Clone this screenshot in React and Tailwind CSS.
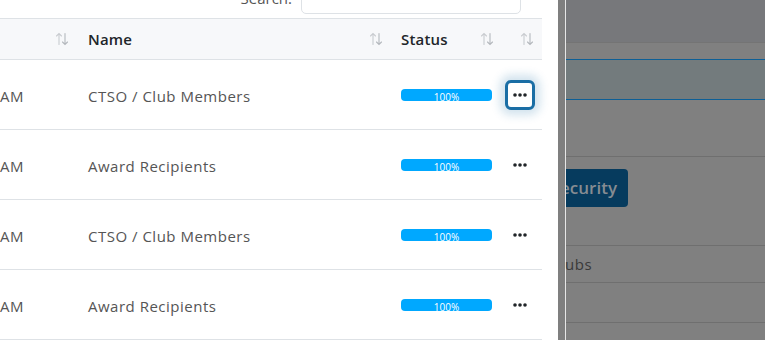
import React from 'react';

const rows = [
  { time: 'AM', name: 'CTSO / Club Members', focused: true },
  { time: 'AM', name: 'Award Recipients' },
  { time: 'AM', name: 'CTSO / Club Members' },
  { time: 'AM', name: 'Award Recipients' },
];

function SortIcon() {
  return (
    <svg width="14" height="14" viewBox="0 0 14 14" fill="none" strokeWidth="1.1" strokeLinecap="round">
      <g stroke="#c9ccd0">
        <path d="M4 12.5V1.5M1.5 4L4 1.5L6.5 4" />
      </g>
      <g stroke="#b4b8bd">
        <path d="M10 1.5V12.5M7.5 10L10 12.5L12.5 10" />
      </g>
    </svg>
  );
}

function Dots() {
  return (
    <svg width="14" height="4" viewBox="0 0 14 4" fill="#212529">
      <circle cx="2" cy="2" r="1.8" />
      <circle cx="7" cy="2" r="1.8" />
      <circle cx="12" cy="2" r="1.8" />
    </svg>
  );
}

export default function App() {
  return (
    <div
      className="flex h-[340px] w-[765px] overflow-hidden bg-[#808080]"
      style={{ fontFamily: '"Open Sans", "Noto Sans", sans-serif' }}
    >
      {/* drawer panel */}
      <div className="w-[558px] shrink-0 bg-white">
        <div className="flex h-[18px] w-[542px] items-end justify-end overflow-hidden pr-[21px]">
          <div className="mb-[4px] flex h-[31px] items-center gap-[9px]">
            <span className="text-[15px] text-[#555]">Search:</span>
            <div className="h-[31px] w-[220px] rounded-[5px] border border-[#dee2e6] bg-white" />
          </div>
        </div>

        <div className="w-[542px]">
          {/* header */}
          <div className="flex h-[42px] border-y border-[#dee2e6] bg-[#f7f8fa] text-[15px] font-semibold text-[#212529]">
            <div className="flex w-[76px] items-center justify-end pr-[7px]">
              <SortIcon />
            </div>
            <div className="flex w-[312px] items-center justify-between pl-[12px] pr-[5px]">
              <span className="tracking-[0.2px]">Name</span>
              <SortIcon />
            </div>
            <div className="flex w-[117px] items-center justify-between pl-[13px] pr-[11px]">
              <span className="tracking-[0.2px]">Status</span>
              <SortIcon />
            </div>
            <div className="flex w-[37px] items-center justify-end pr-[8px]">
              <SortIcon />
            </div>
          </div>

          {/* body */}
          {rows.map((row, i) => (
            <div
              key={i}
              className="flex h-[70px] items-center border-b border-[#dee2e6] text-[15px] tracking-[0.5px] text-[#555]"
            >
              <div className="w-[76px] pt-[4px]">{row.time}</div>
              <div className="w-[312px] pl-[12px] pt-[4px]">{row.name}</div>
              <div className="w-[117px] pl-[13px]">
                <div className="h-[12px] w-[91px] overflow-hidden rounded-[4px] bg-[#00a8ff] text-center text-[10px] leading-[17px] tracking-normal text-white">
                  100%
                </div>
              </div>
              <div className="flex w-[37px] justify-start">
                {row.focused ? (
                  <div className="flex h-[30px] w-[30px] items-center justify-center rounded-[6px] border-[3px] border-[#1a6ea5] bg-white shadow-[0_0_10px_5px_rgba(26,110,165,0.2)]">
                    <Dots />
                  </div>
                ) : (
                  <div className="flex h-[30px] w-[30px] items-center justify-center">
                    <Dots />
                  </div>
                )}
              </div>
            </div>
          ))}
        </div>
      </div>

      {/* page under overlay */}
      <div className="w-[7px] shrink-0 bg-[#7f7f7f]" />
      <div className="w-px shrink-0 bg-[#e6e6e6]" />
      <div className="flex-1">
        <div className="h-[43px] border-b border-[#747474] bg-[#77787b]" />
        <div className="h-[16px]" />
        <div className="h-[41px] border-y border-[#0d5f96] bg-[#737b7d]" />
        <div className="h-[57px] border-b border-[#6f6f6f]" />
        <div className="h-[89px] border-b border-[#6f6f6f] pt-[12px]">
          <div className="flex h-[38px] w-[62px] items-center justify-end overflow-hidden rounded-r-[4px] bg-[#063b5e] pr-[11px]">
            <span className="whitespace-nowrap text-[17px] font-semibold text-[#868c92]">ecurity</span>
          </div>
        </div>
        <div className="flex h-[37px] items-center border-b border-[#6f6f6f] text-[15px] text-[#3a3a3a]">
          <span className="-ml-[1px] tracking-[0.5px]">ubs</span>
        </div>
        <div className="h-[40px] border-b border-[#6f6f6f]" />
      </div>
    </div>
  );
}
